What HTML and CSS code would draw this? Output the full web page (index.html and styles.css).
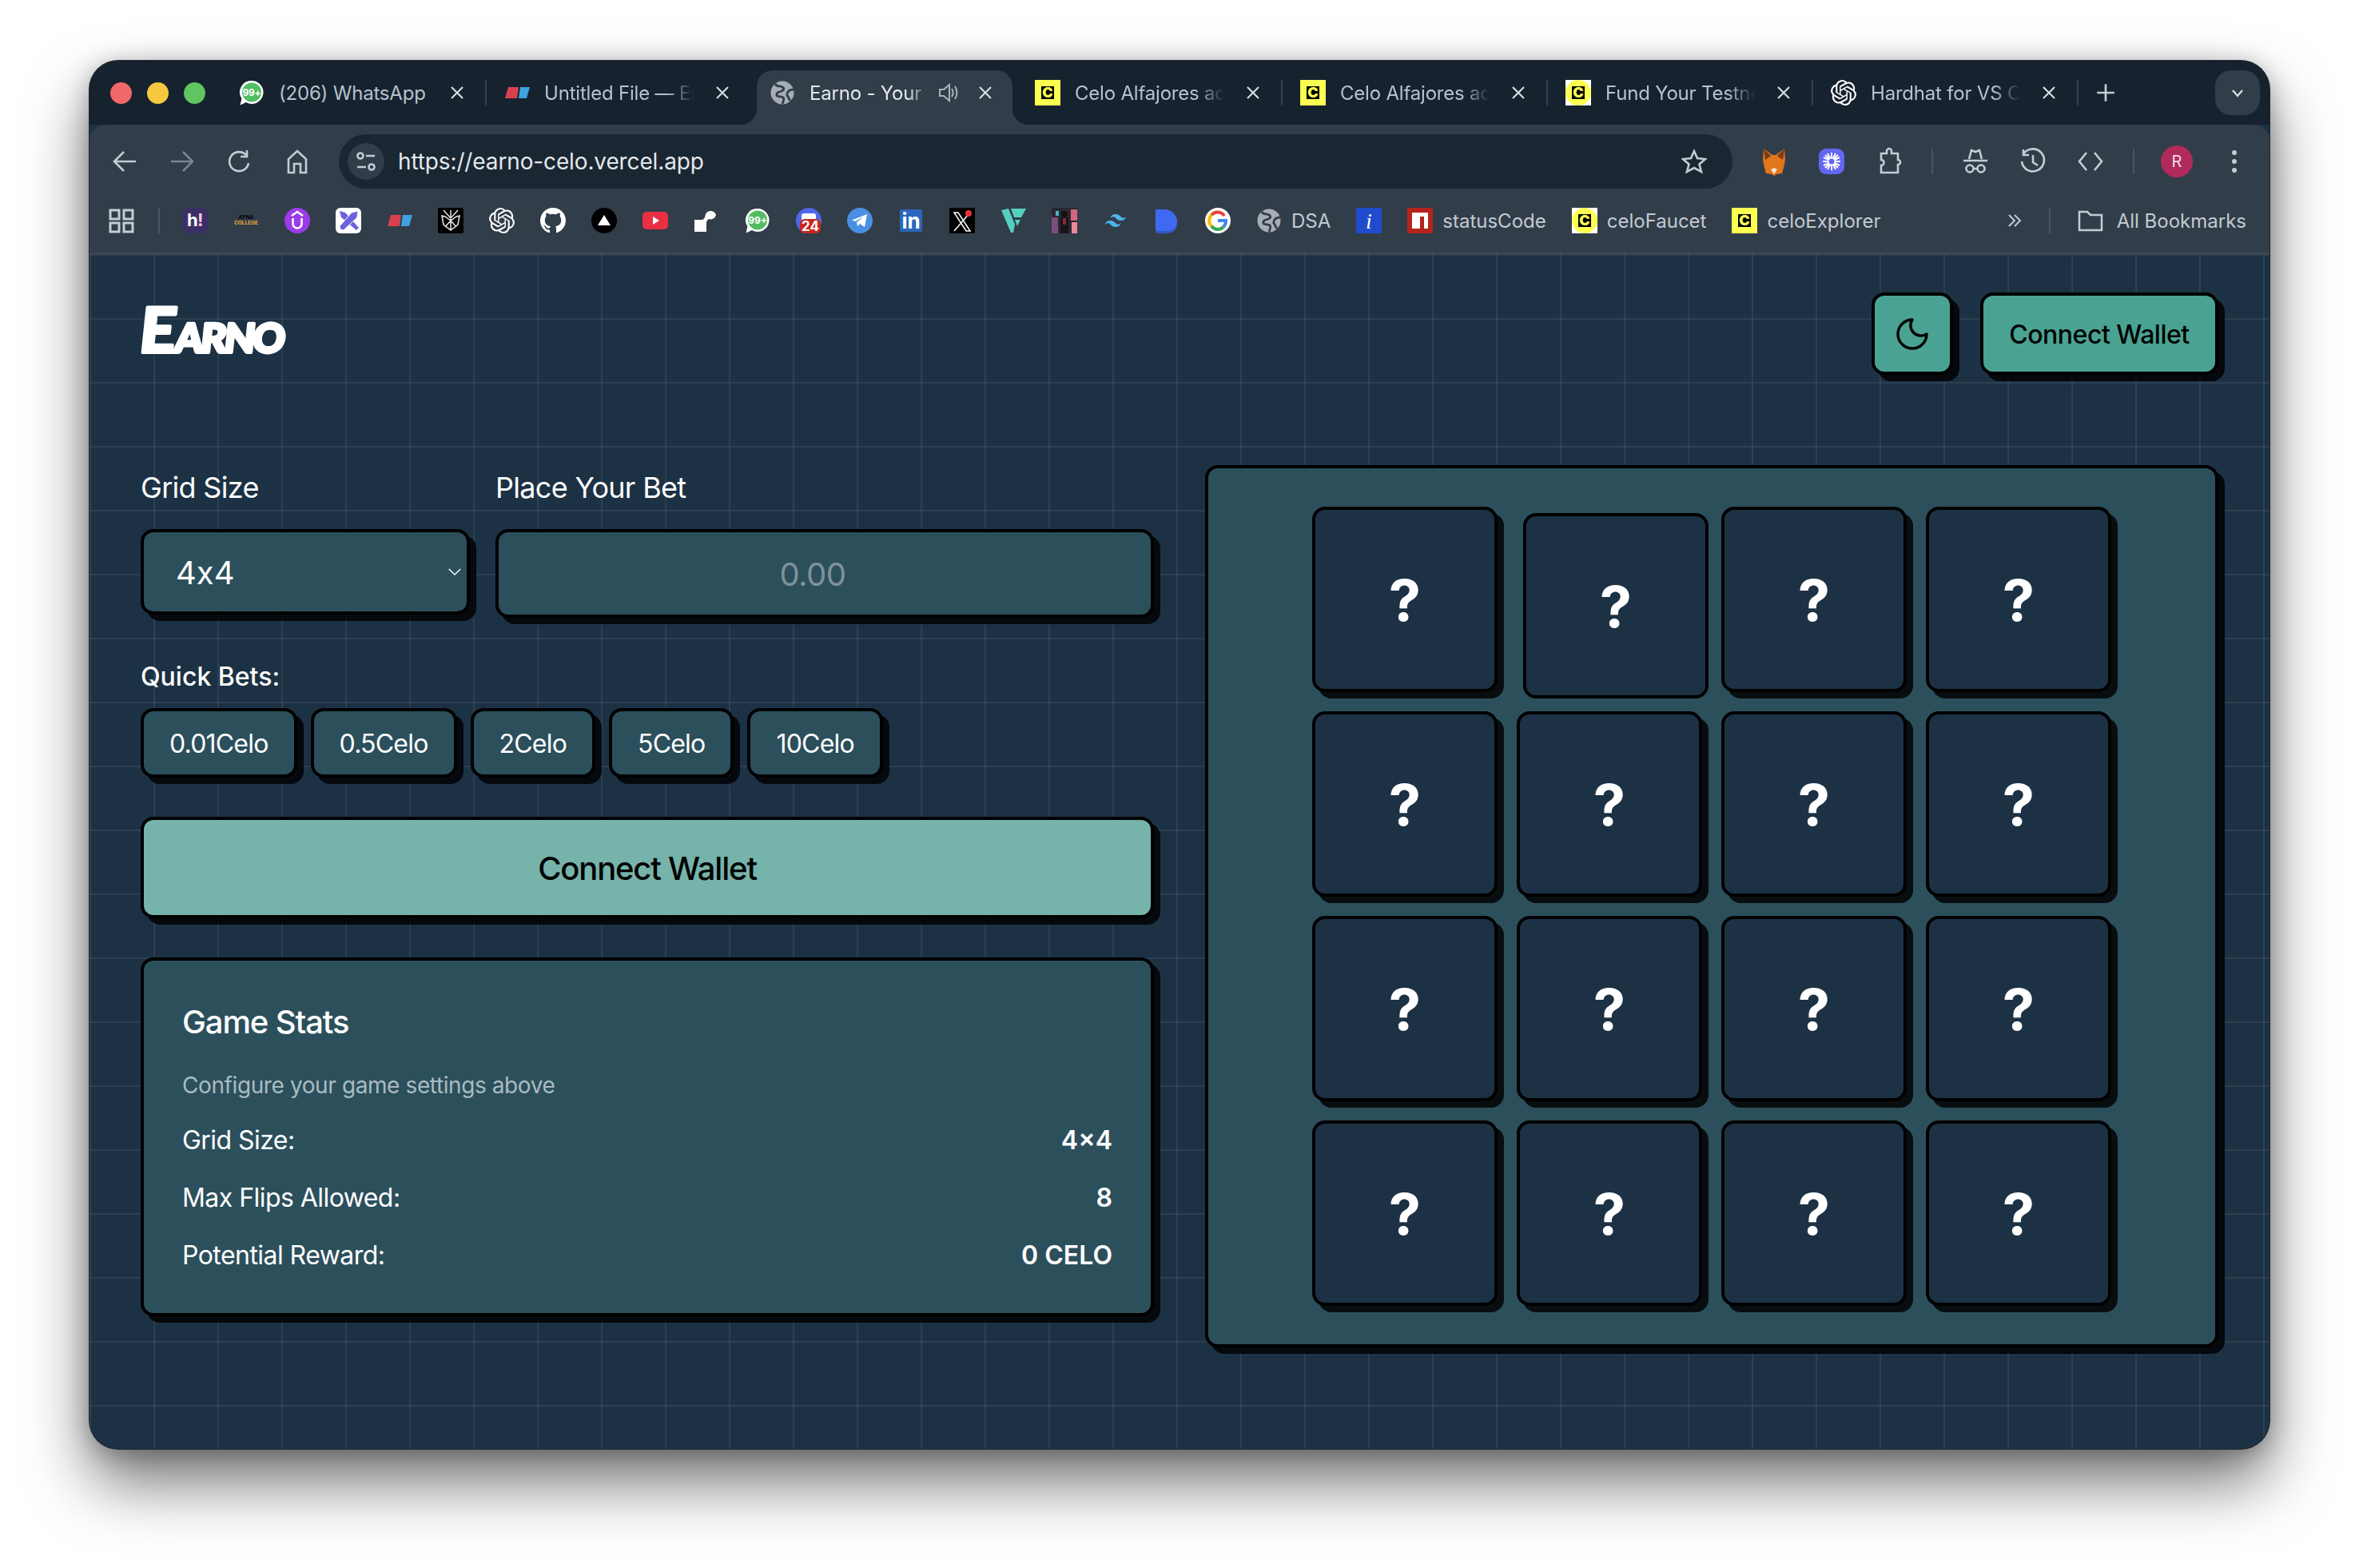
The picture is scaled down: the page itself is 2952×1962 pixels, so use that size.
FILE: index.html
```html
<!DOCTYPE html>
<html lang="en">
<head>
  <meta charset="UTF-8">
  <title>Earno</title>
  <link rel="stylesheet" href="styles.css">
</head>
<body>
  <svg class="defs" width="0" height="0">
    <symbol id="wa-bubble" viewBox="0 0 32 32">
      <path d="M16 1a14.500 14.500 0 0 1 0 29c-2.600 0-5-.7-7-1.900L1.500 31.500l1.900-8A14.500 14.500 0 0 1 16 1z" fill="#fff"/>
      <circle cx="16" cy="15.500" r="12" fill="#52bd62"/>
    </symbol>
    <symbol id="eraser" viewBox="0 0 32 32">
      <path d="M5 9h13l-2 14H1z" fill="#d9404d"/>
      <path d="M20 9h12l-4 14H18z" fill="#3fa2e0"/>
    </symbol>
    <symbol id="globe" viewBox="0 0 32 32">
      <circle cx="16" cy="16" r="14.500" fill="#a6adb5"/>
      <path d="M7 5c2 4 6 2 9 4s2 4-1 5-7 2-6 5 6 1 8 3 0 5-1 8M30 12c-3 0-7 1-8 5s2 3 2 6l2 3" fill="none" stroke="#323d4a" stroke-width="2.800"/>
    </symbol>
    <symbol id="celo-box" viewBox="0 0 32 32">
      <rect width="32" height="32" fill="#fcff52"/>
      <rect x="8" y="8" width="16" height="16" fill="#000"/>
    </symbol>
    <symbol id="celo-round" viewBox="0 0 32 32">
      <rect width="32" height="32" fill="#fff"/>
      <ellipse cx="16" cy="16" rx="16" ry="16" fill="#fcff52"/>
      <rect x="8" y="8" width="16" height="16" fill="#000"/>
    </symbol>
    <symbol id="knot" viewBox="0 0 24 24">
      <path fill="#fff" d="M22.2819 9.8211a5.9847 5.9847 0 0 0-.5157-4.9108 6.0462 6.0462 0 0 0-6.5098-2.9A6.0651 6.0651 0 0 0 4.9807 4.1818a5.9847 5.9847 0 0 0-3.9977 2.9 6.0462 6.0462 0 0 0 .7427 7.0966 5.98 5.98 0 0 0 .511 4.9107 6.051 6.051 0 0 0 6.5146 2.9001A5.9847 5.9847 0 0 0 13.2599 24a6.0557 6.0557 0 0 0 5.7718-4.2058 5.9894 5.9894 0 0 0 3.9977-2.9001 6.0557 6.0557 0 0 0-.7475-7.0729zm-9.022 12.6081a4.4755 4.4755 0 0 1-2.8764-1.0408l.1419-.0804 4.7783-2.7582a.7948.7948 0 0 0 .3927-.6813v-6.7369l2.02 1.1686a.071.071 0 0 1 .038.052v5.5826a4.504 4.504 0 0 1-4.4945 4.4944zm-9.6607-4.1254a4.4708 4.4708 0 0 1-.5346-3.0137l.142.0852 4.783 2.7582a.7712.7712 0 0 0 .7806 0l5.8428-3.3685v2.3324a.0804.0804 0 0 1-.0332.0615L9.74 19.9502a4.4992 4.4992 0 0 1-6.1408-1.6464zM2.3408 7.8956a4.485 4.485 0 0 1 2.3655-1.9728V11.6a.7664.7664 0 0 0 .3879.6765l5.8144 3.3543-2.0201 1.1685a.0757.0757 0 0 1-.071 0l-4.8303-2.7865A4.504 4.504 0 0 1 2.3408 7.872zm16.5963 3.8558L13.1038 8.364 15.1192 7.2a.0757.0757 0 0 1 .071 0l4.8303 2.7913a4.4944 4.4944 0 0 1-.6765 8.1042v-5.6772a.79.79 0 0 0-.407-.667zm2.0107-3.0231l-.142-.0852-4.7735-2.7818a.7759.7759 0 0 0-.7854 0L9.409 9.2297V6.8974a.0662.0662 0 0 1 .0284-.0615l4.8303-2.7866a4.4992 4.4992 0 0 1 6.6802 4.66zM8.3065 12.863l-2.02-1.1638a.0804.0804 0 0 1-.038-.0567V6.0742a4.4992 4.4992 0 0 1 7.3757-3.4537l-.142.0805L8.704 5.459a.7948.7948 0 0 0-.3927.6813zm1.0976-2.3654l2.602-1.4998 2.6069 1.4998v2.9994l-2.5974 1.4997-2.6067-1.4997Z"/>
    </symbol>
    <symbol id="close" viewBox="0 0 20 20">
      <path d="M3 3l14 14M17 3L3 17" fill="none" stroke="#d5dbe2" stroke-width="2.200"/>
    </symbol>
  </svg>

  <div class="window">
    <div class="tabstrip">
      <div class="lights">
        <span class="light red"></span>
        <span class="light yellow"></span>
        <span class="light green"></span>
      </div>
      <div class="tab-slot sep">
        <div class="tab">
          <svg class="fav" viewBox="0 0 32 32"><use href="#wa-bubble" width="32" height="32"/><text x="16" y="19.500" text-anchor="middle" class="wa-text">99+</text></svg>
          <span class="tab-title">(206) WhatsApp</span>
          <svg class="tab-close"><use href="#close"/></svg>
        </div>
      </div>
      <div class="tab-slot">
        <div class="tab">
          <svg class="fav"><use href="#eraser"/></svg>
          <span class="tab-title fade">Untitled File — Er</span>
          <svg class="tab-close"><use href="#close"/></svg>
        </div>
      </div>
      <div class="tab-slot">
        <div class="tab active">
          <svg class="fav"><use href="#globe"/></svg>
          <span class="tab-title fade short">Earno - Your v</span>
          <svg class="tab-sound" viewBox="0 0 28 28">
            <path d="M3 10h5l7-6v20l-7-6H3z" fill="none" stroke="#aab3bd" stroke-width="2"/>
            <path d="M18 9c2 3 2 7 0 10M22 6c3 5 3 11 0 16" fill="none" stroke="#aab3bd" stroke-width="2"/>
          </svg>
          <svg class="tab-close"><use href="#close"/></svg>
        </div>
      </div>
      <div class="tab-slot sep">
        <div class="tab">
          <svg class="fav" viewBox="0 0 32 32"><use href="#celo-box" width="32" height="32"/><text x="16" y="22" text-anchor="middle" class="celo-text">C</text></svg>
          <span class="tab-title fade">Celo Alfajores ad</span>
          <svg class="tab-close"><use href="#close"/></svg>
        </div>
      </div>
      <div class="tab-slot sep">
        <div class="tab">
          <svg class="fav" viewBox="0 0 32 32"><use href="#celo-box" width="32" height="32"/><text x="16" y="22" text-anchor="middle" class="celo-text">C</text></svg>
          <span class="tab-title fade">Celo Alfajores ad</span>
          <svg class="tab-close"><use href="#close"/></svg>
        </div>
      </div>
      <div class="tab-slot sep">
        <div class="tab">
          <svg class="fav" viewBox="0 0 32 32"><use href="#celo-round" width="32" height="32"/><text x="16" y="22" text-anchor="middle" class="celo-text">C</text></svg>
          <span class="tab-title fade">Fund Your Testne</span>
          <svg class="tab-close"><use href="#close"/></svg>
        </div>
      </div>
      <div class="tab-slot sep">
        <div class="tab">
          <svg class="fav"><use href="#knot"/></svg>
          <span class="tab-title fade">Hardhat for VS C</span>
          <svg class="tab-close"><use href="#close"/></svg>
        </div>
      </div>
      <svg class="new-tab" viewBox="0 0 24 24"><path d="M12 2v20M2 12h20" stroke="#c3ccd6" stroke-width="2.500"/></svg>
      <div class="tab-search">
        <svg viewBox="0 0 20 20" width="20" height="20"><path d="M4 7l6 7 6-7" fill="none" stroke="#d5dbe2" stroke-width="2.400"/></svg>
      </div>
    </div>

    <div class="toolbar">
      <span class="tool"><svg viewBox="0 0 36 36"><path d="M32 18H6M17 6L5 18l12 12" class="ic"/></svg></span>
      <span class="tool"><svg viewBox="0 0 36 36"><path d="M4 18h26M19 6l12 12-12 12" class="ic dim"/></svg></span>
      <span class="tool"><svg viewBox="0 0 36 36"><path d="M26 10a12 12 0 1 0 3 10M27 4v8h-8" class="ic"/></svg></span>
      <span class="tool"><svg viewBox="0 0 36 36"><path d="M7 32V15L18 5l11 10v17h-7V21h-8v11z" class="ic"/></svg></span>
      <div class="omnibox">
        <span class="tune">
          <svg viewBox="0 0 28 28" width="28" height="28">
            <circle cx="7" cy="7" r="3.500" class="ic"/><path d="M14 7h11M3 21h11" class="ic"/><circle cx="21" cy="21" r="3.500" class="ic"/>
          </svg>
        </span>
        <span class="url">https://earno-celo.vercel.app</span>
        <svg class="star" viewBox="0 0 32 32"><path d="M16 3l4 9 10 1-7.500 6.500L25 29l-9-5-9 5 2.500-9.500L2 13l10-1z" class="ic"/></svg>
      </div>
      <span class="tool">
        <svg viewBox="0 0 36 36">
          <path d="M5 2l11 8h4l11-8 1 14-2 10-2 7-7 1-3 2-3-2-7-1-2-7-2-10z" fill="#e2761b"/>
          <path d="M5 2l9 9-7 5zM31 2l-9 9 7 5z" fill="#763d16"/>
          <path d="M14 28l4 6 4-6-4-2z" fill="#f4e3d4"/>
        </svg>
      </span>
      <span class="tool">
        <svg viewBox="0 0 36 36">
          <rect x="2" y="2" width="32" height="32" rx="9" fill="#6366f1"/>
          <path d="M18 7v22M7 18h22M10 10l16 16M26 10L10 26M13 8l10 20M23 8L13 28M8 13l20 10M28 13L8 23" stroke="#fff" stroke-width="2"/>
          <circle cx="18" cy="18" r="3.500" fill="#6366f1"/>
        </svg>
      </span>
      <span class="tool"><svg viewBox="0 0 36 36"><path d="M8 8h7V5a3 3 0 0 1 6 0v3h8v8a3 3 0 0 1 0 6v10H8v-9a3.500 3.500 0 0 0 0-7z" class="ic"/></svg></span>
      <span class="divider"></span>
      <span class="tool"><svg viewBox="0 0 36 36"><path d="M10 15l3-11 5 2 5-2 3 11M3 17h30" class="ic"/><circle cx="11" cy="27" r="4.500" class="ic"/><circle cx="25" cy="27" r="4.500" class="ic"/><path d="M15.500 27h5" class="ic"/></svg></span>
      <span class="tool"><svg viewBox="0 0 36 36"><path d="M6 9a14 14 0 1 1-2 9M6 3v7h7M18 10v9l6 4" class="ic"/></svg></span>
      <span class="tool"><svg viewBox="0 0 36 36"><path d="M13 7L4 18l9 11M23 7l9 11-9 11" class="ic"/></svg></span>
      <span class="divider"></span>
      <span class="tool"><span class="avatar">R</span></span>
      <span class="tool"><svg viewBox="0 0 36 36"><circle cx="18" cy="7" r="3" class="dot"/><circle cx="18" cy="18" r="3" class="dot"/><circle cx="18" cy="29" r="3" class="dot"/></svg></span>
    </div>

    <div class="bookmarks">
      <span class="bm apps">
        <svg viewBox="0 0 32 32" class="bm-ic"><path d="M2 3h11v11H2zM19 3h11v11H19zM2 19h11v11H2zM19 19h11v11H19z" fill="none" stroke="#c3ccd6" stroke-width="3"/></svg>
      </span>
      <span class="bm-div"></span>
      <span class="bm"><svg viewBox="0 0 32 32" class="bm-ic"><rect width="32" height="32" rx="8" fill="#3c2f66"/><text x="6" y="23" class="fav-bold" fill="#fff">h</text><text x="19" y="23" class="fav-bold" fill="#f4c6dc">!</text></svg></span>
      <span class="bm"><svg viewBox="0 0 32 32" class="bm-ic"><text x="16" y="14" text-anchor="middle" class="fav-tiny" fill="#000">APNA</text><text x="16" y="21" text-anchor="middle" class="fav-tiny" fill="#e8a93a">COLLEGE</text></svg></span>
      <span class="bm"><svg viewBox="0 0 32 32" class="bm-ic"><circle cx="16" cy="16" r="16" fill="#9b3ce8"/><path d="M9 10l7-5 7 5M10.500 13v7a5.500 5.500 0 0 0 11 0v-7" fill="none" stroke="#fff" stroke-width="2.500"/></svg></span>
      <span class="bm"><svg viewBox="0 0 32 32" class="bm-ic"><rect width="32" height="32" rx="6" fill="#fff"/><path d="M5 4l7 2 17 19-3 3L7 12z" fill="#6a63dc"/><path d="M28 4l-8 2L5 23l1 4 4 1L27 12z" fill="#6a63dc" stroke="#fff"/></svg></span>
      <span class="bm"><svg class="bm-ic"><use href="#eraser"/></svg></span>
      <span class="bm"><svg viewBox="0 0 32 32" class="bm-ic"><rect width="32" height="32" rx="2" fill="#000"/><path d="M16 3v26M7 3l9 10L25 3M5 10l4 1 7 5 7-5 4-1-2 11-9 7-9-7zM16 16l-7 8M16 16l7 8" fill="none" stroke="#e6e6e6" stroke-width="1.500"/></svg></span>
      <span class="bm"><svg class="bm-ic"><use href="#knot"/></svg></span>
      <span class="bm"><svg viewBox="0 0 16 16" class="bm-ic"><path fill="#fff" d="M8 0C3.580 0 0 3.580 0 8c0 3.540 2.290 6.530 5.470 7.590.4.070.55-.17.55-.38 0-.19-.01-.82-.01-1.490-2.010.37-2.530-.49-2.690-.94-.09-.23-.48-.94-.82-1.130-.28-.15-.68-.52-.01-.53.63-.01 1.080.58 1.230.82.72 1.210 1.870.87 2.330.66.070-.52.28-.87.51-1.070-1.780-.2-3.640-.89-3.640-3.950 0-.87.31-1.590.82-2.150-.08-.2-.36-1.020.08-2.120 0 0 .67-.21 2.200.82.64-.18 1.320-.27 2-.27.68 0 1.360.09 2 .27 1.530-1.040 2.200-.82 2.200-.82.44 1.100.16 1.920.08 2.120.51.56.82 1.270.82 2.150 0 3.070-1.870 3.750-3.650 3.950.29.25.54.73.54 1.480 0 1.070-.01 1.930-.01 2.200 0 .21.15.46.55.38A8.013 8.013 0 0 0 16 8c0-4.420-3.580-8-8-8z"/></svg></span>
      <span class="bm"><svg viewBox="0 0 32 32" class="bm-ic"><circle cx="16" cy="16" r="16" fill="#000"/><path d="M16 9l8 13H8z" fill="#fff"/></svg></span>
      <span class="bm"><svg viewBox="0 0 32 32" class="bm-ic"><rect y="5" width="32" height="22" rx="5" fill="#ea2f45"/><path d="M13 11l8 5-8 5z" fill="#fff"/></svg></span>
      <span class="bm"><svg viewBox="0 0 32 32" class="bm-ic"><path d="M1 15h9c4 0 4-4 5-7a7 7 0 0 1 13 1 7 7 0 0 1-9 5c-2 1-3 3-3 5v11H1z" fill="#fff"/></svg></span>
      <span class="bm"><svg viewBox="0 0 32 32" class="bm-ic"><use href="#wa-bubble" width="32" height="32"/><text x="16" y="19.500" text-anchor="middle" class="wa-text">99+</text></svg></span>
      <span class="bm"><svg viewBox="0 0 32 32" class="bm-ic"><circle cx="16" cy="16" r="16" fill="#5067e8"/><rect x="7" y="7" width="18" height="12" rx="3" fill="#fff"/><rect x="5" y="14" width="26" height="18" rx="6" fill="#c9271f"/><text x="18" y="29" text-anchor="middle" class="fav-num" fill="#fff">24</text></svg></span>
      <span class="bm"><svg viewBox="0 0 32 32" class="bm-ic"><circle cx="16" cy="16" r="16" fill="#4a90e2"/><path d="M6 15.500l19-7.500-3 16-6-4-3 3-1-5 9-7-11 6z" fill="#fff"/></svg></span>
      <span class="bm"><svg viewBox="0 0 32 32" class="bm-ic"><rect x="2" y="2" width="28" height="28" rx="2" fill="#2a66bc"/><text x="16" y="26" text-anchor="middle" class="fav-in" fill="#fff">in</text></svg></span>
      <span class="bm"><svg viewBox="0 0 32 32" class="bm-ic"><rect width="32" height="32" fill="#000"/><path d="M6 29L25 7M6 6h5l15 23h-5z" fill="none" stroke="#fff" stroke-width="1.500"/><circle cx="24" cy="7" r="4" fill="#e8303a"/></svg></span>
      <span class="bm"><svg viewBox="0 0 32 32" class="bm-ic"><path d="M1 3l9-2 8 20-2 10h-3z" fill="#54cfc0"/><path d="M13 1h19l-6 11H17z" fill="#54cfc0"/><path d="M18 15h7l-4 8z" fill="#54cfc0"/></svg></span>
      <span class="bm"><svg viewBox="0 0 32 32" class="bm-ic"><rect width="32" height="32" fill="#2a2732"/><rect x="24" y="2" width="8" height="14" fill="#d2667a"/><rect x="0" y="12" width="8" height="20" fill="#7a4f80"/><rect x="25" y="18" width="7" height="14" fill="#e88a9a"/><circle cx="16" cy="8" r="4" fill="#111"/><rect x="11" y="12" width="10" height="20" fill="#14161c"/><rect x="14" y="13" width="4" height="8" fill="#8c2a34"/><rect x="5" y="4" width="4" height="6" fill="#44b8c8"/></svg></span>
      <span class="bm"><svg viewBox="0 0 24 24" class="bm-ic"><path fill="#4db5ec" d="M12 6c-2.670 0-4.330 1.330-5 4 1-1.330 2.170-1.830 3.500-1.500.76.19 1.310.74 1.910 1.350.98 1 2.090 2.150 4.590 2.150 2.670 0 4.330-1.330 5-4-1 1.330-2.170 1.830-3.500 1.500-.76-.19-1.300-.74-1.910-1.350C15.610 7.150 14.500 6 12 6zm-5 6c-2.670 0-4.330 1.330-5 4 1-1.330 2.170-1.830 3.500-1.500.76.19 1.300.74 1.910 1.350C8.390 16.850 9.500 18 12 18c2.670 0 4.330-1.330 5-4-1 1.330-2.170 1.830-3.500 1.500-.76-.19-1.300-.74-1.910-1.350C10.610 13.150 9.500 12 7 12z"/></svg></span>
      <span class="bm"><svg viewBox="0 0 32 32" class="bm-ic"><path d="M2 2h10a17 17 0 0 1 17 17c0 8-5 13-13 13H6a4 4 0 0 1-4-4z" fill="#3359c4"/><path d="M2 2h10a16.500 15 0 0 1 17 15c0 8-5 12-13 12H6a4 4 0 0 1-4-4z" fill="#4069f2"/></svg></span>
      <span class="bm"><svg viewBox="0 0 32 32" class="bm-ic"><circle cx="16" cy="16" r="16" fill="#fff"/><path d="M24 10a10 10 0 0 0-16-1" fill="none" stroke="#ea4335" stroke-width="4"/><path d="M8 9a10 10 0 0 0 0 14" fill="none" stroke="#fbbc05" stroke-width="4"/><path d="M8 23a10 10 0 0 0 15 1" fill="none" stroke="#34a853" stroke-width="4"/><path d="M16 16h10c0 4-1 6-3 8" fill="none" stroke="#4285f4" stroke-width="4"/></svg></span>
      <span class="bm-link"><svg class="bm-ic"><use href="#globe"/></svg><span>DSA</span></span>
      <span class="bm"><svg viewBox="0 0 32 32" class="bm-ic"><rect width="32" height="32" fill="#1f4ccc"/><text x="16" y="26" text-anchor="middle" class="fav-i" fill="#fff">i</text></svg></span>
      <span class="bm-link"><svg viewBox="0 0 32 32" class="bm-ic"><rect width="32" height="32" fill="#b5241c"/><path d="M6 6h20v20h-5V11h-5v15H6z" fill="#fff"/></svg><span>statusCode</span></span>
      <span class="bm-link"><svg viewBox="0 0 32 32" class="bm-ic"><use href="#celo-round" width="32" height="32"/><text x="16" y="22" text-anchor="middle" class="celo-text">C</text></svg><span>celoFaucet</span></span>
      <span class="bm-link"><svg viewBox="0 0 32 32" class="bm-ic"><use href="#celo-box" width="32" height="32"/><text x="16" y="22" text-anchor="middle" class="celo-text">C</text></svg><span>celoExplorer</span></span>
      <div class="bm-end">
        <svg viewBox="0 0 24 24" class="chev"><path d="M5 5l7 7-7 7M12 5l7 7-7 7" fill="none" stroke="#c3ccd6" stroke-width="2"/></svg>
        <span class="bm-div"></span>
        <svg viewBox="0 0 32 32" class="bm-ic"><path d="M2 5h10l4 4h14v19H2z" fill="none" stroke="#c3ccd6" stroke-width="2.500"/></svg>
        <span class="bm-all">All Bookmarks</span>
      </div>
    </div>

    <div class="page">
      <header class="header">
        <svg class="logo" viewBox="0 0 220 100" width="220" height="100">
          <text x="4" y="80" class="logo-text"><tspan class="logo-e">E</tspan><tspan dx="3">ARNO</tspan></text>
        </svg>
        <div class="header-btns">
          <button class="btn btn-icon">
            <svg viewBox="0 0 24 24" width="48" height="48"><path d="M12 3a6.500 6.500 0 0 0 9 9 9 9 0 1 1-9-9z" fill="none" stroke="#000" stroke-width="1.700" stroke-linejoin="round"/></svg>
          </button>
          <button class="btn btn-wallet">Connect Wallet</button>
        </div>
      </header>

      <main class="game">
        <section class="controls">
          <div class="bet-row">
            <div>
              <label class="label">Grid Size</label>
              <div class="select-wrap">
                <select class="select"><option>4x4</option></select>
                <svg class="select-chev" viewBox="0 0 20 12"><path d="M2 2l8 8 8-8" fill="none" stroke="#fff" stroke-width="1.600"/></svg>
              </div>
            </div>
            <div>
              <label class="label">Place Your Bet</label>
              <input class="bet-input" placeholder="0.00">
            </div>
          </div>

          <div class="quick-label">Quick Bets:</div>
          <div class="quick-row">
            <button class="btn quick">0.01Celo</button>
            <button class="btn quick">0.5Celo</button>
            <button class="btn quick">2Celo</button>
            <button class="btn quick">5Celo</button>
            <button class="btn quick">10Celo</button>
          </div>

          <button class="btn btn-big">Connect Wallet</button>

          <div class="stats">
            <h2>Game Stats</h2>
            <p class="hint">Configure your game settings above</p>
            <div class="stat"><span>Grid Size:</span><b>4×4</b></div>
            <div class="stat"><span>Max Flips Allowed:</span><b>8</b></div>
            <div class="stat"><span>Potential Reward:</span><b>0 CELO</b></div>
          </div>
        </section>

        <section class="board">
          <div class="cards">
            <button class="card">?</button>
            <button class="card pressed">?</button>
            <button class="card">?</button>
            <button class="card">?</button>
            <button class="card">?</button>
            <button class="card">?</button>
            <button class="card">?</button>
            <button class="card">?</button>
            <button class="card">?</button>
            <button class="card">?</button>
            <button class="card">?</button>
            <button class="card">?</button>
            <button class="card">?</button>
            <button class="card">?</button>
            <button class="card">?</button>
            <button class="card">?</button>
          </div>
        </section>
      </main>
    </div>
  </div>
</body>
</html>
```

FILE: styles.css
```css
* {
  box-sizing: border-box;
}

html, body {
  height: 100%;
}

body {
  margin: 0;
  padding: 76px 0 0 112px;
  background-color: #fff;
  font-family: Inter, "Liberation Sans", sans-serif;
  overflow: hidden;
}

.defs {
  display: block;
  height: 0;
}

.wa-text {
  font: 700 12px Inter, sans-serif;
  fill: #fff;
}

.celo-text {
  font: 900 18px Inter, sans-serif;
  fill: #fcff52;
}

.fav-bold {
  font: 700 22px Inter, sans-serif;
}

.fav-tiny {
  font: 700 6.500px Inter, sans-serif;
}

.fav-num {
  font: 700 17px Inter, sans-serif;
}

.fav-in {
  font: 700 26px Inter, sans-serif;
}

.fav-i {
  font: italic 400 28px "Liberation Serif", serif;
}

/* browser chrome */
.window {
  width: 2728px;
  height: 1737px;
  display: flex;
  flex-direction: column;
  border-radius: 36px;
  overflow: hidden;
  background-color: #1c3144;
  box-shadow: 0 0 0 1px #23282e, 0 42px 80px rgba(0, 0, 0, 0.55), 0 4px 30px rgba(0, 0, 0, 0.28);
}

.tabstrip {
  height: 80px;
  flex: none;
  display: flex;
  align-items: flex-start;
  padding: 12px 12px 0 26px;
  background-color: #16222e;
}

.lights {
  display: flex;
  gap: 19px;
  margin: 15px 20px 0 0;
}

.light {
  width: 27px;
  height: 27px;
  border-radius: 50%;
}

.red { background-color: #f0686a; }
.yellow { background-color: #f5c93f; }
.green { background-color: #60c463; }

.tab-slot {
  width: 332px;
  height: 68px;
  padding: 0 6px;
  flex: none;
  display: flex;
  position: relative;
}

.tab-slot.sep::after {
  content: "";
  position: absolute;
  right: 0;
  top: 12px;
  width: 2px;
  height: 32px;
  background-color: #333f4c;
}

.tab {
  width: 100%;
  height: 56px;
  display: flex;
  align-items: center;
  padding-left: 16px;
  color: #b7c2ce;
  font-size: 24px;
  letter-spacing: -0.2px;
}

.tab.active {
  height: 68px;
  padding-bottom: 12px;
  background-color: #323d4a;
  border-radius: 20px 20px 0 0;
  color: #e4e8ec;
  position: relative;
}

.tab.active::before,
.tab.active::after {
  content: "";
  position: absolute;
  bottom: 0;
  width: 20px;
  height: 20px;
}

.tab.active::before {
  left: -20px;
  background: radial-gradient(circle at 0 0, transparent 20px, #323d4a 20.500px);
}

.tab.active::after {
  right: -20px;
  background: radial-gradient(circle at 100% 0, transparent 20px, #323d4a 20.500px);
}

.fav {
  width: 32px;
  height: 32px;
  flex: none;
}

.tab-title {
  width: 187px;
  margin: 0 30px 0 18px;
  white-space: nowrap;
  flex: none;
}

.tab-title.fade {
  mask-image: linear-gradient(90deg, #000 82%, transparent);
}

.tab-title.short {
  width: 150px;
  margin-right: 10px;
}

.tab-sound {
  width: 28px;
  height: 28px;
  flex: none;
  margin-right: 26px;
}

.tab-close {
  width: 20px;
  height: 20px;
  flex: none;
  margin-left: -4px;
}

.new-tab {
  width: 26px;
  height: 26px;
  flex: none;
  margin: 15px 0 0 21px;
}

.tab-search {
  width: 56px;
  height: 56px;
  flex: none;
  margin-left: auto;
  border-radius: 20px;
  background-color: #323d4a;
  display: flex;
  align-items: center;
  justify-content: center;
}

.toolbar {
  height: 84px;
  flex: none;
  display: flex;
  align-items: center;
  padding: 8px 0 0 8px;
  background-color: #323d4a;
  border-radius: 20px 20px 0 0;
}

.tool {
  width: 72px;
  height: 60px;
  flex: none;
  display: flex;
  align-items: center;
  justify-content: center;
}

.tool svg {
  width: 36px;
  height: 36px;
}

.ic {
  fill: none;
  stroke: #c3ccd6;
  stroke-width: 2.600;
}

.ic.dim {
  stroke: #7b8591;
}

.dot {
  fill: #c3ccd6;
}

.omnibox {
  width: 1744px;
  height: 68px;
  flex: none;
  margin: 0 16px;
  padding-left: 11px;
  display: flex;
  align-items: center;
  border-radius: 34px;
  background-color: #1a2632;
}

.tune {
  width: 46px;
  height: 46px;
  border-radius: 50%;
  background-color: #323d4a;
  display: flex;
  align-items: center;
  justify-content: center;
}

.url {
  margin-left: 17px;
  color: #e4e8ec;
  font-size: 28px;
  letter-spacing: -0.13px;
}

.star {
  width: 32px;
  height: 32px;
  margin: 0 32px 0 auto;
}

.divider {
  width: 36px;
  height: 32px;
  flex: none;
  display: flex;
  justify-content: center;
}

.divider::before {
  content: "";
  width: 2px;
  background-color: #4b5562;
}

.avatar {
  width: 40px;
  height: 40px;
  border-radius: 50%;
  background-color: #b02a5b;
  color: #f5dbe5;
  font-size: 20px;
  display: flex;
  align-items: center;
  justify-content: center;
}

.bookmarks {
  height: 78px;
  flex: none;
  display: flex;
  align-items: center;
  padding: 0 29px 4px 8px;
  background-color: #323d4a;
  border-bottom: 2px solid #3f4954;
  color: #c3cad2;
  font-size: 24px;
}

.bm {
  width: 64px;
  flex: none;
  display: flex;
  justify-content: center;
}

.bm-ic {
  width: 32px;
  height: 32px;
  flex: none;
}

.bm-div {
  width: 2px;
  height: 32px;
  flex: none;
  margin: 0 12px 0 14px;
  background-color: #4b5562;
}

.bm-link {
  flex: none;
  display: flex;
  align-items: center;
  gap: 12px;
  padding: 0 16px;
}

.bm-end {
  margin-left: auto;
  display: flex;
  align-items: center;
}

.chev {
  width: 24px;
  height: 24px;
  margin-right: 31px;
}

.bm-end .bm-div {
  margin: 0 34px 0 0;
}

.bm-all {
  margin-left: 17px;
}

/* the dapp */
.page {
  flex: 1;
  padding: 48px 64px 0;
  background-color: #1c3144;
  background-image:
    linear-gradient(rgba(255, 255, 255, 0.07) 2px, transparent 2px),
    linear-gradient(90deg, rgba(255, 255, 255, 0.07) 2px, transparent 2px);
  background-size: 80px 80px;
}

.header {
  height: 103px;
  display: flex;
  justify-content: space-between;
  align-items: flex-start;
  color: #fff;
}

.logo {
  margin: -5px 0 0 -4px;
  overflow: visible;
  transform: skewX(-6deg);
}

.logo-text {
  font: 900 50px Lato, sans-serif;
  letter-spacing: -3px;
  fill: #fff;
  stroke: #fff;
  stroke-width: 4px;
  stroke-linejoin: round;
}

.logo-e {
  font-size: 78px;
}

.header-btns {
  display: flex;
  gap: 34px;
}

.btn {
  border: 4px solid #000;
  border-radius: 16px;
  box-shadow: 8px 8px 0 rgba(0, 0, 0, 0.82);
  font-family: inherit;
  background-color: #2c4f5c;
  color: #fff;
  padding: 2px 0 0;
}

.btn-icon {
  width: 102px;
  height: 103px;
  padding: 0;
  background-color: #4aa392;
  display: flex;
  align-items: center;
  justify-content: center;
}

.btn-wallet {
  width: 298px;
  height: 103px;
  background-color: #4aa392;
  color: #000;
  font-size: 32px;
  font-weight: 500;
  letter-spacing: -0.5px;
}

.game {
  margin-top: 113px;
  display: grid;
  grid-template-columns: 1fr 1fr;
  gap: 64px;
  align-items: start;
}

.bet-row {
  display: grid;
  grid-template-columns: 1fr 2fr;
  gap: 32px;
  align-items: start;
}

.label {
  display: block;
  margin-bottom: 24px;
  color: #fff;
  font-size: 36px;
  font-weight: 400;
  line-height: 56px;
  letter-spacing: -0.7px;
}

.select-wrap {
  position: relative;
}

.select {
  width: 100%;
  height: 107px;
  padding: 2px 0 0 40px;
  appearance: none;
  border: 4px solid #000;
  border-radius: 16px;
  box-shadow: 8px 8px 0 rgba(0, 0, 0, 0.82);
  background-color: #2c4f5c;
  color: #fff;
  font-family: inherit;
  font-size: 40px;
  font-feature-settings: "calt" 0;
}

.select-chev {
  position: absolute;
  right: 10px;
  top: 48px;
  width: 18px;
  height: 11px;
}

.bet-input {
  width: 100%;
  height: 111px;
  padding: 2px 30px 0 0;
  border: 4px solid #000;
  border-radius: 16px;
  box-shadow: 8px 8px 0 rgba(0, 0, 0, 0.82);
  background-color: #2c4f5c;
  color: #fff;
  font-family: inherit;
  font-size: 40px;
  letter-spacing: -0.5px;
  text-align: center;
}

.bet-input::placeholder {
  color: #7f929b;
}

.quick-label {
  margin: 50px 0 15px;
  color: #fff;
  font-size: 32px;
  font-weight: 500;
  line-height: 48px;
}

.quick-row {
  display: flex;
  gap: 17px;
}

.quick {
  height: 87px;
  padding: 2px 32px 0;
  font-size: 32px;
  letter-spacing: -0.8px;
}

.btn-big {
  display: block;
  width: 100%;
  height: 127px;
  margin-top: 49px;
  background-color: #75b3ab;
  color: #000;
  font-size: 40px;
  font-weight: 500;
  letter-spacing: -1.2px;
}

.stats {
  margin-top: 49px;
  padding: 48px;
  border: 4px solid #000;
  border-radius: 16px;
  box-shadow: 8px 8px 0 rgba(0, 0, 0, 0.82);
  background-color: #2c4f5c;
  color: #fff;
}

.stats h2 {
  margin: 0;
  font-size: 40px;
  font-weight: 500;
  line-height: 58px;
  letter-spacing: -1.1px;
}

.hint {
  margin: 28px 0 23px;
  color: #a9bcc0;
  font-size: 28px;
  line-height: 44px;
  letter-spacing: -0.4px;
}

.stat {
  display: flex;
  justify-content: space-between;
  font-size: 32px;
  line-height: 48px;
  margin-bottom: 24px;
  letter-spacing: -0.55px;
}

.stat:last-child {
  margin-bottom: 0;
}

.stat b {
  font-weight: 600;
  letter-spacing: 0;
}

.board {
  padding: 48px;
  display: flex;
  justify-content: center;
  border: 4px solid #000;
  border-radius: 16px;
  box-shadow: 8px 8px 0 rgba(0, 0, 0, 0.82);
  background-color: #2c4f5c;
}

.cards {
  display: grid;
  grid-template-columns: repeat(4, 232px);
  grid-auto-rows: 232px;
  gap: 24px;
}

.card {
  border: 4px solid #000;
  border-radius: 16px;
  box-shadow: 8px 8px 0 rgba(0, 0, 0, 0.82);
  background-color: #1c3144;
  color: #fff;
  font-family: inherit;
  font-size: 72px;
  font-weight: 700;
  padding: 0;
}

.card.pressed {
  transform: translate(8px, 8px);
  box-shadow: none;
}
```
